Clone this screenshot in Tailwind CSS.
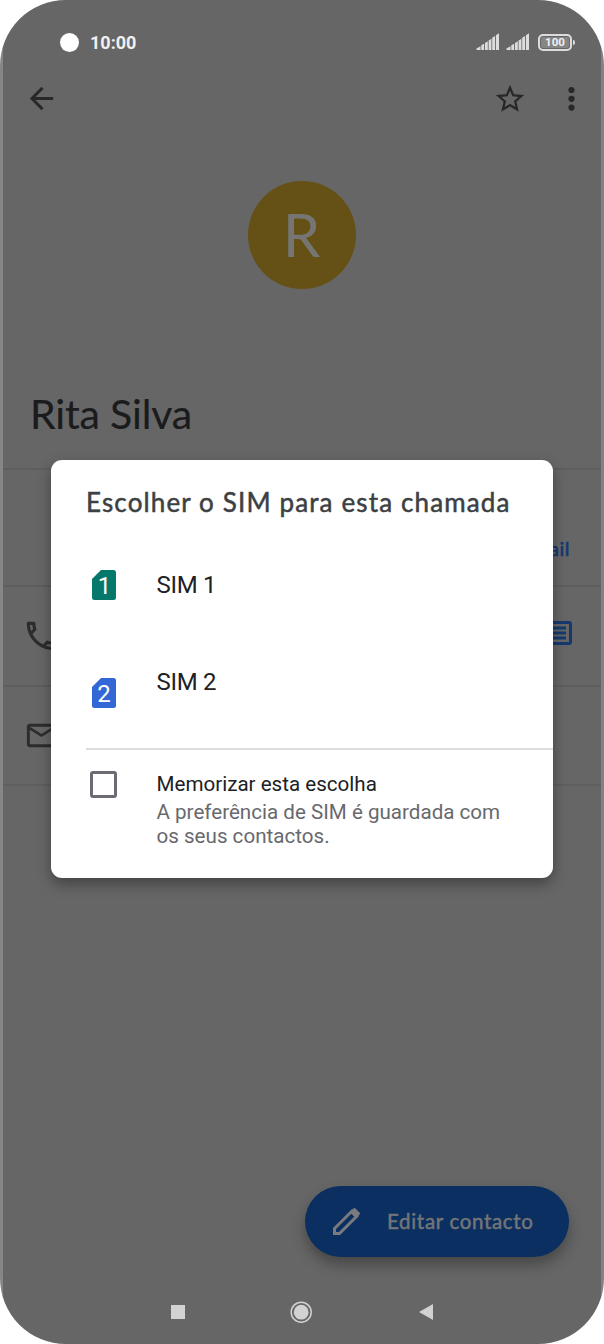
<!DOCTYPE html>
<html lang="pt">
<head>
<meta charset="utf-8">
<title>Contacto</title>
<script src="https://cdn.jsdelivr.net/npm/@tailwindcss/browser@4"></script>
</head>
<body class="bg-white">
<div class="relative flex h-[1344px] w-[604px] flex-col overflow-hidden rounded-[66px] bg-[linear-gradient(90deg,#868688_3px,#666666_3px,#666666_601px,#818186_601px)] px-[3px] font-['Roboto',sans-serif]">
  <!-- status bar -->
  <header class="flex h-[72px] shrink-0 items-center pl-[57px] pr-[26px] pt-3">
    <div class="h-[19px] w-[19px] rounded-full bg-white"></div>
    <span class="mt-[2px] ml-[11px] text-[18px] leading-none font-bold text-[#f0f0f0]">10:00</span>
    <svg class="ml-auto h-[18px] w-[24px]" viewBox="0 0 24 18" fill="#dcdcdc"><path d="M.5 17v-1.500l4-2.300v3.800zM5.300 12.300l2.800-1.500v6.200h-2.800zM9 10l2.800-1.700v8.700h-2.800zM12.600 7.500l2.800-1.700v11.200h-2.800zM16.200 4.700l2.800-1.700v14h-2.800zM19.900 2.200l3.100-1.900v16.700h-3.100z"/></svg>
    <svg class="ml-[6px] h-[18px] w-[24px]" viewBox="0 0 24 18" fill="#dcdcdc"><path d="M.5 17v-1.500l4-2.300v3.800zM5.300 12.300l2.800-1.500v6.200h-2.800zM9 10l2.800-1.700v8.700h-2.800zM12.600 7.500l2.800-1.700v11.200h-2.800zM16.200 4.700l2.800-1.700v14h-2.800zM19.900 2.200l3.100-1.900v16.700h-3.100z"/></svg>
    <div class="ml-[8px] flex h-[17px] w-[34px] items-center justify-center rounded-[5px] border-2 border-[#dcdcdc] bg-[#858585] pt-px text-[11.500px] leading-none font-bold text-[#f0f0f0] ring-1 ring-inset ring-[#666666]">100</div>
    <div class="ml-[1px] h-[5px] w-[2px] rounded-r bg-[#dcdcdc]"></div>
  </header>

  <!-- toolbar -->
  <nav class="flex h-[53px] shrink-0 items-center pl-[20.500px] pr-[11px] text-[#28282a]">
    <svg class="h-[35px] w-[35px]" viewBox="0 0 24 24" fill="currentColor"><path d="M20 11H7.830l5.590-5.590L12 4l-8 8 8 8 1.410-1.410L7.830 13H20v-2z"/></svg>
    <svg class="ml-auto h-[34px] w-[34px]" viewBox="0 0 24 24" fill="currentColor"><path d="M22 9.240l-7.190-.62L12 2 9.190 8.630 2 9.240l5.460 4.730L5.820 21 12 17.270 18.180 21l-1.630-7.030L22 9.240zM12 15.400l-3.760 2.270 1-4.280-3.320-2.880 4.380-.38L12 6.100l1.710 4.040 4.380.38-3.320 2.880 1 4.280L12 15.400z"/></svg>
    <svg class="ml-[27px] h-[36px] w-[36px]" viewBox="0 0 36 36" fill="currentColor"><circle cx="17.500" cy="9" r="3.100"/><circle cx="17.500" cy="17.800" r="3.100"/><circle cx="17.500" cy="26.600" r="3.100"/></svg>
  </nav>

  <!-- contact -->
  <section class="flex h-[345px] shrink-0 flex-col border-b-2 border-[#5e5e5e]">
    <div class="mt-[56px] ml-[244.500px] flex h-[108px] w-[108px] items-center justify-center rounded-full bg-[#655116] pb-[2px] font-['Lato',sans-serif] text-[60px] leading-none text-[#757573]">R</div>
    <h1 class="mt-[99px] ml-[27px] font-['Lato',sans-serif] text-[41px] leading-[52px] tracking-[-0.15px] whitespace-nowrap text-[#1a1b1d] [-webkit-text-stroke:0.2px_#1a1b1d]">Rita Silva</h1>
  </section>
  <section class="flex h-[117px] shrink-0 items-center justify-end border-b-2 border-[#5e5e5e] pr-[31px] pt-[41px] font-['Lato',sans-serif] text-[20px] tracking-[0.5px] text-[#16396d] [-webkit-text-stroke:0.6px_#16396d]">Email</section>
  <section class="flex h-[100px] shrink-0 items-center justify-between border-b-2 border-[#5e5e5e] pl-[19px] pr-[29px]">
    <svg class="h-[38px] w-[38px]" viewBox="0 0 24 24" fill="#2b2c2e"><path d="M6.540 5c.06.89.21 1.760.45 2.590l-1.200 1.200c-.41-1.200-.67-2.470-.76-3.790h1.510m9.860 12.020c.85.24 1.720.39 2.600.45v1.490c-1.320-.09-2.590-.35-3.800-.75l1.200-1.190M7.500 3H4c-.55 0-1 .45-1 1 0 9.390 7.610 17 17 17 .55 0 1-.45 1-1v-3.490c0-.55-.45-1-1-1-1.240 0-2.450-.2-3.570-.57-.1-.04-.21-.05-.31-.05-.26 0-.51.1-.71.29l-2.200 2.200c-2.830-1.450-5.150-3.760-6.590-6.590l2.200-2.200c.28-.28.36-.67.25-1.020C8.700 6.450 8.500 5.250 8.500 4c0-.55-.45-1-1-1z"/></svg>
    <svg class="mb-[6px] h-[24px] w-[27px]" viewBox="0 0 27 24" fill="none" stroke="#16396d" stroke-width="3"><rect x="1.500" y="1.500" width="24" height="21" rx="1.500"/><path d="M6 7h15M6 12h15M6 17h15"/></svg>
  </section>
  <section class="flex h-[99px] shrink-0 items-center border-b-2 border-[#5e5e5e] pl-[20.500px]">
    <svg class="h-[35px] w-[35px]" viewBox="0 0 24 24" fill="#2b2c2e"><path d="M22 6c0-1.100-.9-2-2-2H4c-1.100 0-2 .9-2 2v12c0 1.100.9 2 2 2h16c1.100 0 2-.9 2-2V6zm-2 0l-8 5-8-5h16zm0 12H4V8l8 5 8-5v10z"/></svg>
  </section>

  <div class="flex flex-1 items-end justify-end pr-[32px] pb-[23px]">
    <button class="flex h-[71px] w-[264px] items-center rounded-full bg-[#0a2f60] pl-[27px] shadow-[0_8px_14px_rgba(0,0,0,0.3)]">
      <svg class="h-[29px] w-[29px]" viewBox="0 0 29 29" fill="none" stroke="#7a7b7e" stroke-linejoin="round"><path d="M2.500 26.500V21.500L20 4 25 9 7.500 26.500z" stroke-width="3" stroke-linejoin="miter"/><path d="M19 5l3.500-3 4.500 4.500L24 10z" fill="#7a7b7e" stroke-width="2"/></svg>
      <span class="ml-[26px] font-['Lato',sans-serif] text-[20.500px] leading-none tracking-[0.680px] whitespace-nowrap text-[#747578] [-webkit-text-stroke:0.500px_#747578]">Editar contacto</span>
    </button>
  </div>

  <!-- system navigation -->
  <footer class="flex h-[64px] shrink-0 pl-[168px]">
    <div class="mt-[25px] h-[14px] w-[14px] bg-[#d2d2d2]"></div>
    <svg class="mt-[21px] ml-[105px] h-[22px] w-[22px]" viewBox="0 0 22 22"><circle cx="11.200" cy="11.200" r="10" fill="none" stroke="#d2d2d2" stroke-width="1.500"/><circle cx="11.200" cy="11.200" r="7.400" fill="#d2d2d2"/></svg>
    <svg class="mt-[24px] ml-[107px] h-[16px] w-[14px]" viewBox="0 0 14 16" fill="#d2d2d2"><path d="M14 0v16L0 8z"/></svg>
  </footer>

  <!-- SIM dialog -->
  <div role="dialog" class="absolute top-[459.500px] left-[51px] flex h-[418.500px] w-[502px] flex-col rounded-[11px] bg-white shadow-[0_6px_14px_rgba(0,0,0,0.35)]">
    <h2 class="mt-[24px] ml-[35px] font-['Lato',sans-serif] text-[26px] leading-[36px] tracking-[1.130px] whitespace-nowrap text-[#3c4043] [-webkit-text-stroke:0.500px_#3c4043]">Escolher o SIM para esta chamada</h2>
    <div class="mt-[48px] flex h-[34px] items-center pl-[40.500px]">
      <svg class="h-[30px] w-[24px]" viewBox="0 0 24 30"><path d="M9 0h12.500q2.500 0 2.500 2.500v25q0 2.500-2.500 2.500h-19Q0 30 0 27.500V9z" fill="#04796b"/><text x="12.500" y="23.500" text-anchor="middle" font-family="Roboto" font-size="24" fill="#fff">1</text></svg>
      <span class="ml-[41px] text-[24px] leading-none tracking-[-0.300px] text-[#202124]">SIM 1</span>
    </div>
    <div class="mt-[63px] flex h-[42px] items-start pl-[40.500px]">
      <svg class="mt-[13px] h-[30px] w-[24px]" viewBox="0 0 24 30"><path d="M9 0h12.500q2.500 0 2.500 2.500v25q0 2.500-2.500 2.500h-19Q0 30 0 27.500V9z" fill="#3367d6"/><text x="12" y="24" text-anchor="middle" font-family="Roboto" font-size="24" fill="#fff">2</text></svg>
      <span class="ml-[41px] mt-[5px] text-[24px] leading-none tracking-[-0.300px] text-[#202124]">SIM 2</span>
    </div>
    <div class="mt-[41.500px] ml-[35px] h-[2px] shrink-0 bg-[#dcdde0]"></div>
    <div class="flex pl-[39px] pt-[21px]">
      <div class="h-[27px] w-[27px] shrink-0 rounded-[3px] border-3 border-[#6b6c71]"></div>
      <div class="ml-[39.500px] whitespace-nowrap text-[20.600px]">
        <p class="leading-[26px] text-[#202124]">Memorizar esta escolha</p>
        <p class="mt-[2.500px] leading-[24px] text-[#68696d]">A preferência de SIM é guardada com<br>os seus contactos.</p>
      </div>
    </div>
  </div>
</div>
</body>
</html>
